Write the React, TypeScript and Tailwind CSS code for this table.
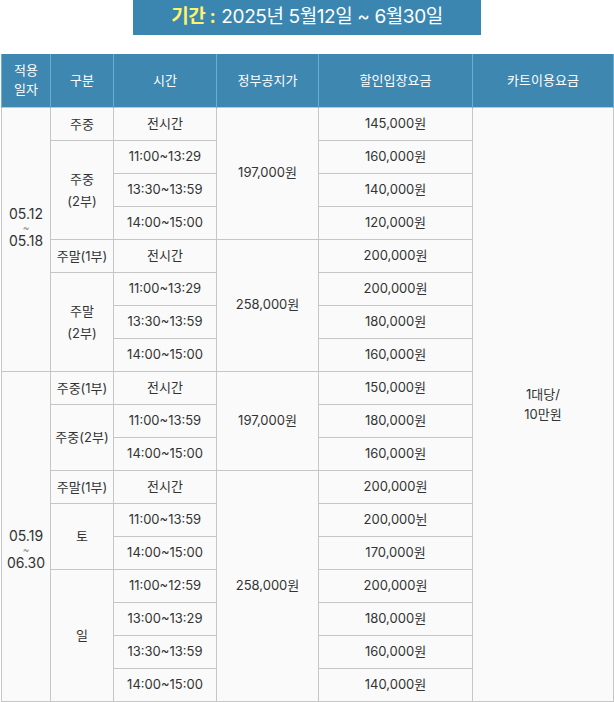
const font = { fontFamily: '"Inter", "Noto Sans CJK KR", sans-serif' };

type Row = {
  date?: { from: string; to: string; span: number; shift: string };
  type?: { label: string[]; span: number };
  time: string;
  list?: { price: string; span: number };
  price: string;
};

const rows: Row[] = [
  { date: { from: '05.12', to: '05.18', span: 8, shift: 'pb-[24px]' }, type: { label: ['주중'], span: 1 }, time: '전시간', list: { price: '197,000원', span: 4 }, price: '145,000원' },
  { type: { label: ['주중', '(2부)'], span: 3 }, time: '11:00~13:29', price: '160,000원' },
  { time: '13:30~13:59', price: '140,000원' },
  { time: '14:00~15:00', price: '120,000원' },
  { type: { label: ['주말(1부)'], span: 1 }, time: '전시간', list: { price: '258,000원', span: 4 }, price: '200,000원' },
  { type: { label: ['주말', '(2부)'], span: 3 }, time: '11:00~13:29', price: '200,000원' },
  { time: '13:30~13:59', price: '180,000원' },
  { time: '14:00~15:00', price: '160,000원' },
  { date: { from: '05.19', to: '06.30', span: 10, shift: 'pt-[26px]' }, type: { label: ['주중(1부)'], span: 1 }, time: '전시간', list: { price: '197,000원', span: 3 }, price: '150,000원' },
  { type: { label: ['주중(2부)'], span: 2 }, time: '11:00~13:59', price: '180,000원' },
  { time: '14:00~15:00', price: '160,000원' },
  { type: { label: ['주말(1부)'], span: 1 }, time: '전시간', list: { price: '258,000원', span: 7 }, price: '200,000원' },
  { type: { label: ['토'], span: 2 }, time: '11:00~13:59', price: '200,000뉜' },
  { time: '14:00~15:00', price: '170,000원' },
  { type: { label: ['일'], span: 4 }, time: '11:00~12:59', price: '200,000원' },
  { time: '13:00~13:29', price: '180,000원' },
  { time: '13:30~13:59', price: '160,000원' },
  { time: '14:00~15:00', price: '140,000원' },
];

const th = 'border-x border-[#6aaed6] bg-[#3d87b0] font-normal text-white text-[13px] leading-[19px]';
const td = 'border border-[#c6c6c6] text-center align-middle text-[13px] text-[#333]';

export default function App() {
  return (
    <div className="w-[614px] h-[702px] bg-white" style={font}>
      <div className="flex justify-center">
        <div className="flex h-[35px] w-[348px] items-center justify-center bg-[#3a86b0] text-[19px] tracking-[-0.4px] text-white">
          <span className="mr-[6px] font-bold text-[#fff36a]">기간 :</span>
          <span>2025년 5월12일 ~ 6월30일</span>
        </div>
      </div>
      <div className="mt-[19px] pl-[1px]">
        <table className="w-[612px] table-fixed border-collapse bg-[#fafafa]">
          <colgroup>
            <col className="w-[49px]" />
            <col className="w-[63px]" />
            <col className="w-[103px]" />
            <col className="w-[102px]" />
            <col className="w-[154px]" />
            <col className="w-[141px]" />
          </colgroup>
          <thead>
            <tr className="h-[53px]">
              <th className={th}>
                적용
                <br />
                일자
              </th>
              <th className={th}>구분</th>
              <th className={th}>시간</th>
              <th className={th}>정부공지가</th>
              <th className={th}>할인입장요금</th>
              <th className={th}>카트이용요금</th>
            </tr>
          </thead>
          <tbody>
            {rows.map((r, i) => (
              <tr key={i} className="h-[33px]">
                {r.date && (
                  <td rowSpan={r.date.span} className={td}>
                    <div className={`flex flex-col items-center ${r.date.shift}`}>
                      <span className="text-[14px] leading-[15px]">{r.date.from}</span>
                      <span className="text-[10px] leading-[12px] text-[#888]">~</span>
                      <span className="text-[14px] leading-[15px]">{r.date.to}</span>
                    </div>
                  </td>
                )}
                {r.type && (
                  <td rowSpan={r.type.span} className={`${td} leading-[22px]`}>
                    {r.type.label.map((l) => (
                      <div key={l}>{l}</div>
                    ))}
                  </td>
                )}
                <td className={td}>{r.time}</td>
                {r.list && (
                  <td rowSpan={r.list.span} className={td}>
                    {r.list.price}
                  </td>
                )}
                <td className={td}>{r.price}</td>
                {i === 0 && (
                  <td rowSpan={18} className={`${td} leading-[20px]`}>
                    1대당/
                    <br />
                    10만원
                  </td>
                )}
              </tr>
            ))}
          </tbody>
        </table>
      </div>
    </div>
  );
}
